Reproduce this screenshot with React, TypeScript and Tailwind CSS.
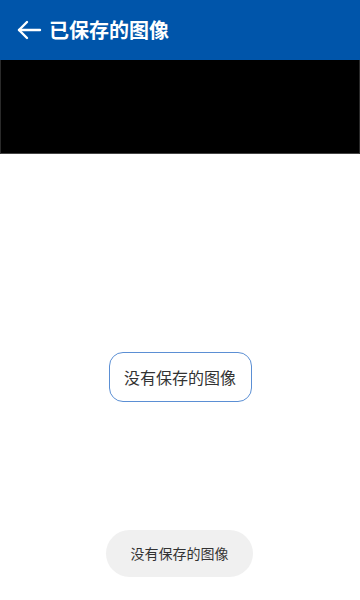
import React from 'react';

export default function App() {
  return (
    <div
      className="relative flex h-[600px] w-[360px] flex-col overflow-hidden bg-white"
      style={{ fontFamily: '"Noto Sans CJK SC", "Noto Sans", sans-serif' }}
    >
      {/* 顶部栏 */}
      <div className="flex h-[60px] items-center bg-[#0055aa] pl-[16px]">
        <svg width="26" height="20" viewBox="0 0 26 20" fill="none" stroke="white" strokeWidth="2.4" strokeLinecap="round" strokeLinejoin="round">
          <path d="M24 10H3" />
          <path d="M11 2L3 10L11 18" />
        </svg>
        <span className="ml-[7px] text-[20px] font-bold leading-none text-white">已保存的图像</span>
      </div>

      {/* 黑色预览区 */}
      <div className="h-[94px] border border-t-0 border-[#2a2a2a] border-b-[#444] bg-black" />

      {/* 空状态 */}
      <div className="flex flex-1 items-start justify-center pt-[198px]">
        <div className="flex h-[50px] w-[143px] items-center justify-center rounded-[14px] border border-[#5b8fd4] text-[16px] text-[#333]">
          没有保存的图像
        </div>
      </div>

      {/* 提示 */}
      <div className="absolute left-[106px] top-[530px] flex h-[47px] w-[147px] items-center justify-center rounded-full bg-[#f0f0f0] text-[14px] text-[#333]">
        没有保存的图像
      </div>
    </div>
  );
}
